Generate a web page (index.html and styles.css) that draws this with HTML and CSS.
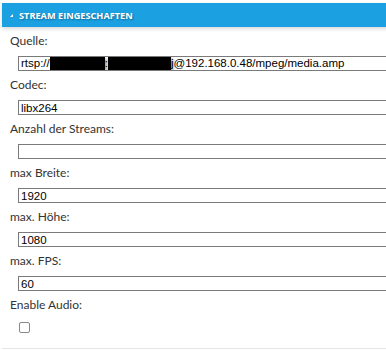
FILE: index.html
```html
<!DOCTYPE html>
<html lang="de">
<head>
    <meta charset="UTF-8">
    <meta name="viewport" content="width=device-width, initial-scale=1.0">
    <title>Stream Eigenschaften</title>
    <link rel="stylesheet" href="styles.css">
</head>
<body>
    <div class="panel">
        <div class="panel-header">
            <span class="arrow"></span>
            <span class="panel-title">Stream Eingeschaften</span>
        </div>

        <div class="panel-body">
            <div class="field">
                <label>Quelle:</label>
                <div class="text-box">rtsp://<span class="redact r1"></span>:<span class="redact r2"></span>j@192.168.0.48/mpeg/media.amp</div>
            </div>
            <div class="field">
                <label>Codec:</label>
                <input type="text" class="text-box" value="libx264">
            </div>
            <div class="field">
                <label>Anzahl der Streams:</label>
                <input type="text" class="text-box" value="">
            </div>
            <div class="field">
                <label>max Breite:</label>
                <input type="text" class="text-box" value="1920">
            </div>
            <div class="field">
                <label>max. Höhe:</label>
                <input type="text" class="text-box" value="1080">
            </div>
            <div class="field">
                <label>max. FPS:</label>
                <input type="text" class="text-box" value="60">
            </div>
            <div class="field">
                <label>Enable Audio:</label>
                <span class="check"></span>
            </div>
        </div>
    </div>
</body>
</html>
```

FILE: styles.css
```css
:root {
    --header-color: #1ba1e2;
    --text-color: #333;
    --border-color: #7a7a7a;
}

body {
    margin: 0;
    padding: 3px 0 0 2px;
    background-color: white;
    font-family: 'Lato', sans-serif;
    color: var(--text-color);
    overflow: hidden;
}

.panel {
    width: 400px;
    height: 346px;
    border-bottom: 1px solid #e6e6e6;
    box-sizing: border-box;
}

.panel-header {
    height: 24px;
    background-color: var(--header-color);
    display: flex;
    align-items: center;
    padding-left: 8px;
    box-shadow: 0 2px 4px rgba(0,0,0,0.15);
}

.arrow {
    width: 0;
    height: 0;
    border-left: 3px solid transparent;
    border-bottom: 3px solid white;
    margin-right: 6px;
    margin-top: 1px;
}

.panel-title {
    color: white;
    font-family: 'Open Sans', sans-serif;
    font-size: 9.2px;
    font-weight: bold;
    text-transform: uppercase;
    text-shadow: 1px 1px 2px rgba(0,0,0,0.35);
}

.panel-body {
    padding: 5px 0 0 8px;
}

.field {
    height: 44px;
}

.field label {
    display: block;
    font-size: 12px;
    line-height: 16px;
    padding-top: 1px;
    height: 24px;
    box-sizing: border-box;
}

.text-box {
    display: block;
    box-sizing: border-box;
    width: 380px;
    height: 15px;
    margin: 0 0 0 8px;
    padding: 0 2px;
    border: 1px solid var(--border-color);
    font-family: 'Liberation Sans', Arial, sans-serif;
    font-size: 11.5px;
    line-height: 13px;
    color: #000;
    background: white;
    white-space: nowrap;
    overflow: hidden;
}

.redact {
    display: inline-block;
    height: 13px;
    background: #000;
    vertical-align: top;
    box-shadow: 2px 2px 3px rgba(0,0,0,0.4);
}

.r1 {
    width: 55px;
}

.r2 {
    width: 63px;
}

.check {
    display: block;
    width: 9px;
    height: 9px;
    margin: 2px 0 0 9px;
    border: 1px solid #888;
    border-radius: 2px;
}
```
